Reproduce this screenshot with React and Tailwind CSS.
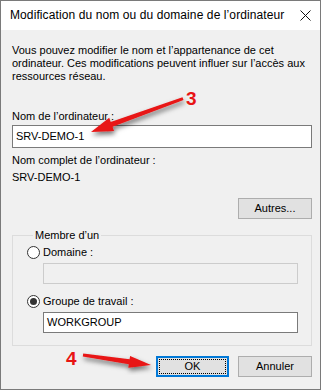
import React from 'react';

const font = { fontFamily: '"Liberation Sans", Arial, sans-serif' };

const Radio = ({ checked, label }) => (
  <div className="flex items-center h-[13px] gap-[3px]">
    <span className="w-[13px] h-[13px] rounded-full border border-[#333333] bg-white flex items-center justify-center">
      {checked && <span className="w-[7px] h-[7px] rounded-full bg-[#333333]" />}
    </span>
    <span className="leading-[13px]">{label}</span>
  </div>
);

const Arrows = () => (
  <svg className="absolute inset-0 pointer-events-none" width="323" height="391" viewBox="0 0 323 391">
    <defs>
      <filter id="sh" x="-20%" y="-50%" width="140%" height="200%">
        <feDropShadow dx="1" dy="3" stdDeviation="2.5" floodColor="#000" floodOpacity="0.55" />
      </filter>
    </defs>
    <polygon
      filter="url(#sh)"
      fill="#e81414"
      points="182.5,97.2 110.7,122.1 109.2,117.8 91,132 114,131 112.5,126.7 183.5,100"
    />
    <polygon
      filter="url(#sh)"
      fill="#e81414"
      points="83.2,353.5 129.6,359.3 130.1,355.9 151,365 128.3,367.7 128.8,364.3 82.8,356.5"
    />
  </svg>
);

const App = () => {
  return (
    <div className="relative w-[323px] h-[391px] bg-white text-[11px] text-black overflow-hidden" style={font}>
      <div className="w-[321px] h-[390px] border border-[#7a7a7a] flex flex-col">
        {/* title bar */}
        <div className="h-[29px] bg-white flex items-center justify-between pl-[9px] pr-[8px]">
          <span className="text-[12px] leading-[15px] whitespace-nowrap tracking-[0.1px]">Modification du nom ou du domaine de l’ordinateur</span>
          <svg width="11" height="11" viewBox="0 0 11 11" className="mr-[1px] shrink-0">
            <path d="M0.5 0.5 L10.5 10.5 M10.5 0.5 L0.5 10.5" stroke="#111" strokeWidth="1" />
          </svg>
        </div>

        {/* body */}
        <div className="flex-1 bg-[#f0f0f0] pl-[11px] flex flex-col">
          <div className="w-[300px]">
            <p className="mt-[14px] leading-[13px]">
              Vous pouvez modifier le nom et l’appartenance de cet ordinateur. Ces modifications peuvent influer sur l’accès aux ressources réseau.
            </p>

            <div className="mt-[27px] leading-[13px]">Nom de l’ordinateur :</div>
            <div className="mt-[2px] h-[23px] border border-[#7a7a7a] bg-white flex items-center pl-[3px] leading-[13px]">
              SRV-DEMO-1
            </div>

            <div className="mt-[6px] leading-[13px]">Nom complet de l’ordinateur :</div>
            <div className="mt-[4px] leading-[13px]">SRV-DEMO-1</div>

            <div className="flex justify-end mt-[14px]">
              <button className="w-[74px] h-[21px] border border-[#adadad] bg-[#e1e1e1] leading-[13px]">Autres...</button>
            </div>

            <fieldset className="mt-[10px] border border-[#dcdcdc] pl-[14px] pb-[12px]">
              <legend className="ml-[6px] px-[2px] leading-[13px]">Membre d’un</legend>
              <div className="mt-[4px]">
                <Radio label="Domaine :" />
              </div>
              <div className="mt-[4px] ml-[16px] w-[255px] h-[21px] border border-[#cccccc] bg-[#f0f0f0]" />
              <div className="mt-[11px]">
                <Radio checked label="Groupe de travail :" />
              </div>
              <div className="mt-[4px] ml-[16px] w-[255px] h-[21px] border border-[#7a7a7a] bg-white flex items-center pl-[3px] leading-[13px]">
                WORKGROUP
              </div>
            </fieldset>

            <div className="flex justify-end gap-[9px] mt-[10px]">
              <button className="w-[73px] h-[21px] border-2 border-[#0078d7] bg-[#e1e1e1] p-[1px]">
                <span className="flex w-full h-full items-center justify-center border border-dotted border-black leading-[13px]">OK</span>
              </button>
              <button className="w-[74px] h-[21px] border border-[#adadad] bg-[#e1e1e1] leading-[13px]">Annuler</button>
            </div>
          </div>
        </div>
      </div>

      <Arrows />
      <span className="absolute left-[186px] top-[88px] text-[19px] font-bold text-[#e81414] leading-[22px]">3</span>
      <span className="absolute left-[66px] top-[348px] text-[19px] font-bold text-[#e81414] leading-[22px]">4</span>
    </div>
  );
};

export default App;
